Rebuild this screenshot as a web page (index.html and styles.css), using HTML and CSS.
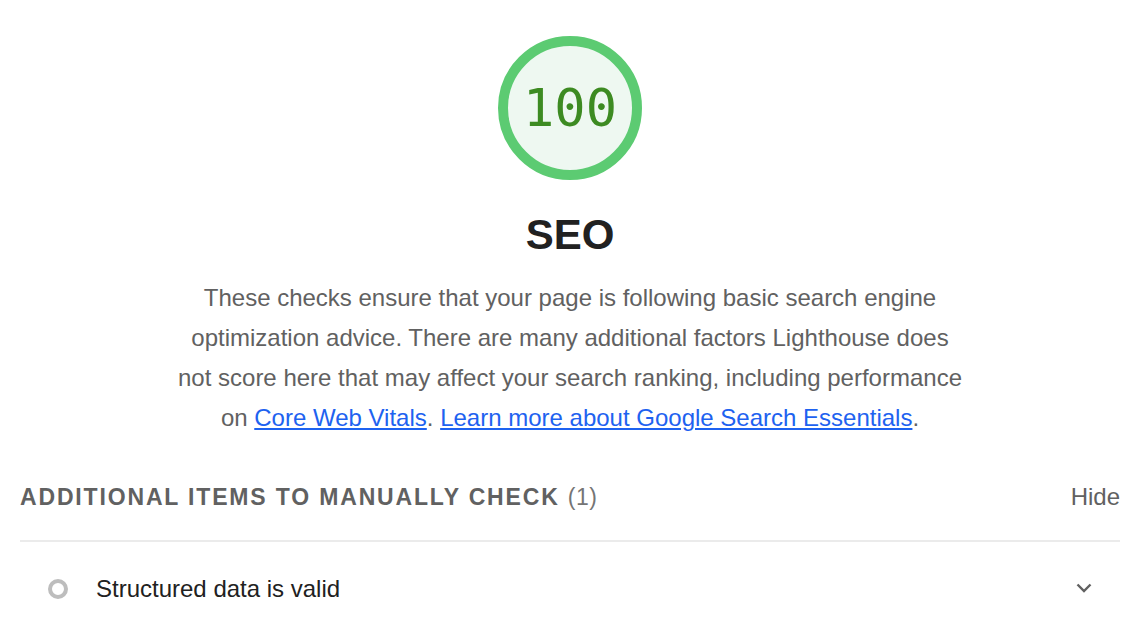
FILE: index.html
```html
<!DOCTYPE html>
<html lang="en">
<head>
<meta charset="utf-8">
<title>SEO</title>
<link rel="stylesheet" href="styles.css">
</head>
<body>
<main class="report">
  <section class="category-header">
    <div class="gauge"><span class="gauge-value">100</span></div>
    <h1 class="category-title">SEO</h1>
    <p class="category-desc">These checks ensure that your page is following basic search engine optimization advice. There are many additional factors Lighthouse does not score here that may affect your search ranking, including performance on <a href="#">Core Web Vitals</a>. <a href="#">Learn more about Google Search Essentials</a>.</p>
  </section>
  <section class="group">
    <div class="group-header">
      <div class="group-title">Additional items to manually check <span class="group-count">(1)</span></div>
      <div class="group-toggle">Hide</div>
    </div>
    <div class="audit">
      <span class="audit-icon"></span>
      <span class="audit-title">Structured data is valid</span>
      <svg class="chevron" width="16" height="12" viewBox="0 0 16 12"><path d="M1.5 2.5 L8 9 L14.5 2.5" fill="none" stroke="#616161" stroke-width="2.4"/></svg>
    </div>
  </section>
</main>
</body>
</html>
```

FILE: styles.css
```css
* { box-sizing: border-box; }
html, body { margin: 0; padding: 0; background: #fff; }
body { font-family: "Liberation Sans", Arial, sans-serif; color: #212121; }
.report { padding: 36px 16px 0 20px; width: 1136px; }
.category-header { display: flex; flex-direction: column; align-items: center; }
.gauge {
  width: 144px; height: 144px; border-radius: 50%;
  border: 10px solid #5ccb72; background: #eef8f1;
  display: flex; align-items: center; justify-content: center;
}
.gauge-value {
  font-family: "DejaVu Sans Mono", monospace; font-size: 52px; color: #3d8b22;
  line-height: 1; margin-top: -1px;
}
.category-title { margin: 20px 0 0; font-size: 42px; font-weight: bold; line-height: 70px; color: #212121; }
.category-desc {
  margin: 8px 0 0; max-width: 793px; text-align: center;
  font-size: 24px; line-height: 40px; color: #616161;
}
.category-desc a { color: #1e62f0; text-decoration: underline; }
.group { margin-top: 38px; }
.group-header {
  display: flex; justify-content: space-between; align-items: center;
  height: 66px; padding-bottom: 22px; border-bottom: 2px solid #ebebeb;
}
.group-title {
  text-transform: uppercase; font-weight: bold; font-size: 23px; letter-spacing: 0.08em;
  color: #616161;
}
.group-count { font-weight: normal; color: #757575; letter-spacing: 0.02em; }
.group-toggle { font-size: 24px; color: #616161; }
.audit { display: flex; align-items: center; height: 94px; padding: 0 28px 0 28px; }
.audit-icon { width: 20px; height: 20px; border-radius: 50%; border: 4px solid #bdbdbd; }
.audit-title { margin-left: 28px; font-size: 24px; color: #212121; flex: 1; }
.chevron { display: block; margin-top: -2px; }
```
